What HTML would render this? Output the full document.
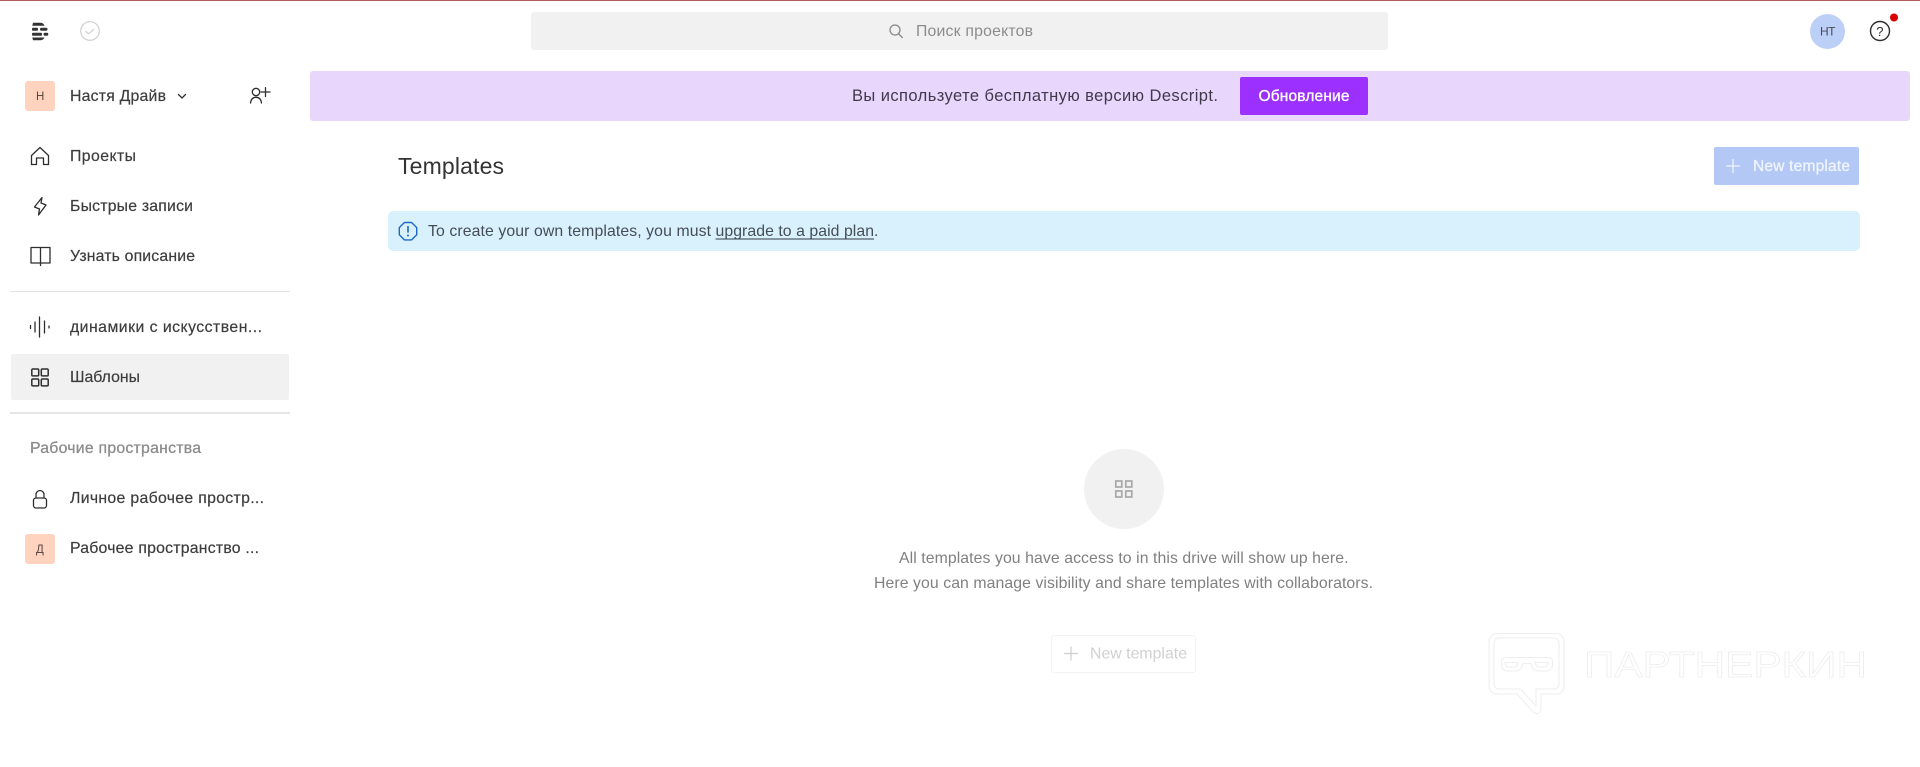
<!DOCTYPE html>
<html lang="ru"><head><meta charset="utf-8"><title>Templates</title>
<style>
html,body{margin:0;padding:0;background:#fff;width:1920px;height:767px;overflow:hidden}
svg{display:block;position:absolute;left:0;top:0;filter:blur(.35px)}
text{font-family:"Liberation Sans","DejaVu Sans",sans-serif;font-size:15.800px;fill:#3d3d3d;white-space:pre}
.i{fill:none;stroke:#2e2e2e;stroke-width:1.300;stroke-linecap:round;stroke-linejoin:round}
.m{stroke:#3d3d3d;stroke-width:.2}
</style></head><body>
<svg width="1920" height="767" viewBox="0 0 1920 767" xmlns="http://www.w3.org/2000/svg">
<rect x="0" y="0" width="1920" height="1" fill="#b35c5c"/>

<!-- top bar -->
<g fill="#333"><path d="M33 22.800h7.500c1.800 0 3.300 1 4 2.900H32.300z"/><rect x="32" y="27.800" width="6" height="3" rx="1"/><rect x="40" y="27.800" width="7.500" height="3" rx="1.500"/><rect x="32" y="32.800" width="10" height="3" rx="1"/><rect x="43.500" y="32.800" width="4.800" height="3" rx="1.500"/><path d="M32.300 37.500h12.200c-.7 1.800-2.200 2.700-4 2.700H33z"/></g>
<circle cx="90" cy="31" r="9.300" fill="none" stroke="#cfcfcf" stroke-width="1.200"/>
<path d="M85.800 31.500l2.800 2.300 5.200-4.500" fill="none" stroke="#cfcfcf" stroke-width="1.200" stroke-linecap="round" stroke-linejoin="round"/>
<rect x="531" y="12" width="857" height="38" rx="3" fill="#f1f1f1"/>
<circle cx="895" cy="30" r="5" fill="none" stroke="#888" stroke-width="1.300"/>
<path d="M898.800 34l3.500 3.500" stroke="#888" stroke-width="1.300" stroke-linecap="round"/>
<text x="916" y="36" textLength="117" style="fill:#8c8c8c">Поиск проектов</text>
<circle cx="1827.500" cy="31.500" r="17.500" fill="#bccff7"/>
<text x="1820" y="35.500" textLength="15.500" style="font-size:12px;fill:#4a4a55">НТ</text>
<circle cx="1880" cy="31" r="9.500" fill="none" stroke="#2e2e2e" stroke-width="1.400"/>
<text x="1876.200" y="36" style="font-size:13px;fill:#2e2e2e">?</text>
<circle cx="1894" cy="17.500" r="4" fill="#d90000"/>

<!-- workspace header -->
<rect x="25" y="81" width="30" height="30" rx="3" fill="#ffd3be"/>
<text x="36" y="100" style="font-size:11.500px;fill:#5a4a44">Н</text>
<text class="m" x="70" y="101" textLength="96">Настя Драйв</text>
<path class="i" d="M178.500 94.500l3.500 3.500 3.500-3.500"/>
<circle class="i" cx="256" cy="92" r="3.700"/>
<path class="i" d="M250.500 103c.5-3.800 2.600-5.700 5.500-5.700s5 1.900 5.500 5.700M261 92h9M265.500 87.700v8.800"/>

<!-- nav -->
<path class="i" d="M31.500 164.500v-9l8.500-8 8.500 8v9h-5v-6.500h-7v6.500z"/>
<text class="m" x="70" y="161" textLength="66">Проекты</text>
<path class="i" d="M42 197.500l-7.500 9.500 5 2-1 6 7.500-10-5-2z"/>
<text class="m" x="70" y="211" textLength="123">Быстрые записи</text>
<path class="i" d="M31 247.500h9.500V263H31zM40.500 247.500H50V263h-9.500zM40.500 263v2.500"/>
<text class="m" x="70" y="261" textLength="125">Узнать описание</text>
<rect x="10" y="291" width="280" height="1" fill="#e3e3e3"/>
<path class="i" d="M30.500 325.500v3M35 322v10M39.500 317v20M44.500 321v12M49 326v2"/>
<text class="m" x="70" y="332" textLength="192">динамики с искусствен...</text>
<rect x="11" y="354" width="278" height="46" rx="2" fill="#f1f1f1"/>
<g class="i" style="stroke-width:1.500"><rect x="31.800" y="369" width="6.900" height="6.900" rx="1"/><rect x="41.300" y="369" width="6.900" height="6.900" rx="1"/><rect x="31.800" y="379" width="6.900" height="6.900" rx="1"/><rect x="41.300" y="379" width="6.900" height="6.900" rx="1"/></g>
<text class="m" x="70" y="382" textLength="70">Шаблоны</text>
<rect x="10" y="412" width="280" height="2" fill="#e6e6e6"/>
<text x="30" y="453" textLength="171" style="fill:#8c8c8c;stroke:#8c8c8c;stroke-width:.3">Рабочие пространства</text>
<path class="i" d="M36 498v-3.500a4 4 0 0 1 8 0V498"/>
<rect class="i" x="33.500" y="498" width="13" height="10" rx="2.500"/>
<text class="m" x="70" y="503" textLength="194">Личное рабочее простр...</text>
<rect x="25" y="534" width="30" height="30" rx="3" fill="#ffd3be"/>
<text x="36" y="553" style="font-size:11.500px;fill:#5a4a44">Д</text>
<text class="m" x="70" y="553" textLength="189">Рабочее пространство ...</text>

<!-- upgrade banner -->
<rect x="310" y="71" width="1600" height="50" rx="3" fill="#e9d6fd"/>
<text x="852" y="101" textLength="366" style="font-size:16.500px;fill:#41394a">Вы используете бесплатную версию Descript.</text>
<rect x="1240" y="77" width="128" height="38" rx="2" fill="#9b30ff"/>
<text x="1258.500" y="101" textLength="91" style="fill:#fff;stroke:#fff;stroke-width:.35;font-size:15.500px">Обновление</text>

<!-- heading -->
<text x="398" y="174" textLength="106" style="font-size:23px;fill:#333">Templates</text>
<rect x="1714" y="147" width="145" height="38" rx="2" fill="#b3c8f5"/>
<path d="M1726 166h14M1733 159v14" stroke="#eef3fe" stroke-width="1.300"/>
<text x="1753" y="171" textLength="97" style="fill:#eef3fe;stroke:#eef3fe;stroke-width:.35;font-size:15.500px">New template</text>

<!-- alert -->
<rect x="388" y="211" width="1472" height="40" rx="5" fill="#d9f1fd"/>
<path d="M404.400 222.500h7.200l5.100 5.100v7.200l-5.100 5.100h-7.200l-5.100-5.100v-7.200z" fill="none" stroke="#1f67c9" stroke-width="1.400" stroke-linejoin="round"/>
<path d="M408 226.500v5.500" stroke="#1f67c9" stroke-width="1.600" stroke-linecap="round"/>
<circle cx="408" cy="235.500" r="1" fill="#1f67c9"/>
<text x="428" y="236" textLength="283" style="fill:#454d55">To create your own templates, you must</text>
<text x="715.500" y="236" textLength="158.500" style="fill:#454d55">upgrade to a paid plan</text>
<text x="874" y="236" style="fill:#454d55">.</text>
<rect x="715.500" y="238.500" width="158.500" height="1" fill="#333b44"/>

<!-- empty state -->
<circle cx="1124" cy="489" r="40" fill="#f1f1f1"/>
<g fill="none" stroke="#a8a8a8" stroke-width="1.700"><rect x="1115.800" y="481" width="6" height="6"/><rect x="1125.800" y="481" width="6" height="6"/><rect x="1115.800" y="491" width="6" height="6"/><rect x="1125.800" y="491" width="6" height="6"/></g>
<text x="899" y="563" textLength="449.500" style="fill:#808080">All templates you have access to in this drive will show up here.</text>
<text x="874" y="588" textLength="499" style="fill:#808080">Here you can manage visibility and share templates with collaborators.</text>
<rect x="1051.500" y="635.500" width="144" height="37" rx="2.500" fill="#fff" stroke="#f3f3f3"/>
<path d="M1064 653.500h14M1071 646.500v14" stroke="#cfcfcf" stroke-width="1.200"/>
<text x="1090" y="658.500" textLength="97" style="fill:#d0d0d0">New template</text>

<!-- watermark -->
<g fill="none" stroke="#eeeeee" stroke-width="1" stroke-linejoin="round">
<path d="M1497 633.500h59a8 8 0 0 1 8 8v44.500a8 8 0 0 1-8 8h-15v15a4.500 4.500 0 0 1-8 2.800l-16-17.800h-20a8 8 0 0 1-8-8v-44.500a8 8 0 0 1 8-8z"/>
<path d="M1499 638h55a5 5 0 0 1 5 5v41a5 5 0 0 1-5 5h-18v17l-15.500-17h-21.500a5 5 0 0 1-5-5v-41a5 5 0 0 1 5-5z"/>
<path d="M1505 657.500h44a3.500 3.500 0 0 1 3.500 3.500v3c0 4-2 7-6.500 7h-7c-4.500 0-7-3-8-7.500h-8c-1 4.500-3.500 7.500-8 7.500h-7c-4.500 0-6.500-3-6.500-7v-3a3.500 3.500 0 0 1 3.500-3.500z"/>
<path d="M1505 662.500h13c-.5 3-2 4.500-5 4.500h-4c-2.500 0-4-1.500-4-4.500zM1535 662.500h13c0 3-1.500 4.500-4 4.500h-4c-3 0-4.500-1.500-5-4.500z"/>
</g>
<text x="1584" y="677" textLength="283" lengthAdjust="spacingAndGlyphs" style="font-size:36px;fill:#fff;stroke:#ececec;stroke-width:.7">ПАРТНЕРКИН</text>
</svg>
</body></html>
